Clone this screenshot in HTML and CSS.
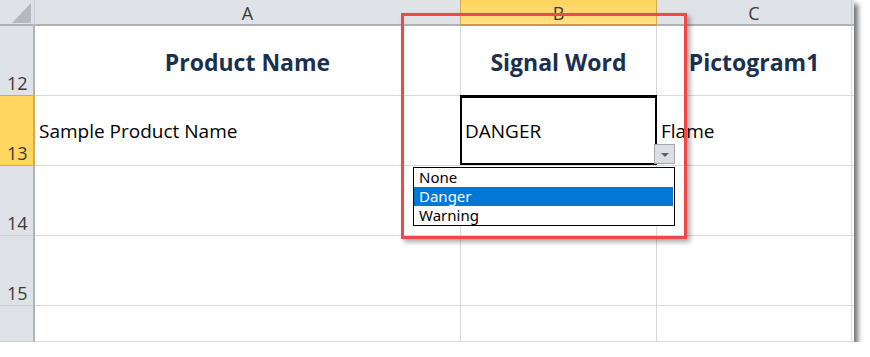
FILE: index.html
```html
<!DOCTYPE html>
<html lang="en">
<head>
    <meta charset="UTF-8">
    <title>Signal Word</title>
    <link rel="stylesheet" href="styles.css">
</head>
<body>
<div class="sheet">
    <div class="corner"><span class="corner-tri"></span></div>
    <div class="col-head">A</div>
    <div class="col-head col-active">B</div>
    <div class="col-head">C</div>
    <div class="col-head col-end"></div>

    <div class="row-head">12</div>
    <div class="cell cell-title">Product Name</div>
    <div class="cell cell-title">Signal Word</div>
    <div class="cell cell-title">Pictogram1</div>
    <div class="cell cell-end"></div>

    <div class="row-head row-active">13</div>
    <div class="cell cell-text">Sample Product Name</div>
    <div class="cell cell-text cell-selected">DANGER</div>
    <div class="cell cell-text">Flame</div>
    <div class="cell cell-end"></div>

    <div class="row-head">14</div>
    <div class="cell"></div>
    <div class="cell"></div>
    <div class="cell"></div>
    <div class="cell cell-end"></div>

    <div class="row-head">15</div>
    <div class="cell"></div>
    <div class="cell"></div>
    <div class="cell"></div>
    <div class="cell cell-end"></div>

    <div class="row-head"></div>
    <div class="cell"></div>
    <div class="cell"></div>
    <div class="cell"></div>
    <div class="cell cell-end"></div>

    <div class="dd-button"><span class="dd-arrow"></span></div>
    <ul class="dd-list">
        <li>None</li>
        <li class="active">Danger</li>
        <li>Warning</li>
    </ul>
    <div class="highlight"></div>
</div>
</body>
</html>
```

FILE: styles.css
```css
body {
    margin: 0;
    background: #fff;
    font-family: "Open Sans", Arial, sans-serif;
}
.sheet {
    position: relative;
    display: grid;
    grid-template-columns: 35px 426px 196px 195px 2px;
    grid-template-rows: 26px 70px 70px 70px 70px 36px;
    width: 854px;
    height: 342px;
    background: #fff;
    box-shadow: 4px 4px 5px rgba(0, 0, 0, 0.55);
}
.corner, .col-head, .row-head, .cell {
    box-sizing: border-box;
}
.corner {
    position: relative;
    background: #dfe2e6;
    border-right: 1px solid #c9ccd1;
    border-bottom: 2px solid #aeb1b6;
}
.corner-tri {
    position: absolute;
    left: 12px;
    top: 3px;
    width: 19px;
    height: 20px;
    background: #b5b9be;
    clip-path: polygon(100% 0, 100% 100%, 0 100%);
}
.col-head {
    display: flex;
    justify-content: center;
    background: #dfe2e6;
    border-right: 1px solid #c9ccd1;
    border-bottom: 2px solid #aeb1b6;
    color: #3a3a3a;
    font-size: 18px;
    line-height: 26px;
}
.col-active {
    background: linear-gradient(#ffd45e, #ffe084);
    border-left: 1px solid #d6aa4e;
    border-right: 1px solid #d6aa4e;
    border-bottom-color: #c99c42;
    margin-left: -1px;
}
.col-end {
    border-right: none;
}
.row-head {
    display: flex;
    align-items: flex-end;
    padding: 0 0 3px 7px;
    background: #dfe2e6;
    border-right: 2px solid #aeb1b6;
    border-bottom: 1px solid #c9ccd1;
    color: #3a3a3a;
    font-size: 18px;
    line-height: 18px;
}
.row-active {
    background: #ffd65f;
    border-right-color: #d6aa4e;
    border-bottom-color: #d6aa4e;
    border-top: 1px solid #d6aa4e;
    margin-top: -1px;
}
.cell {
    position: relative;
    display: flex;
    border-right: 1px solid #d9d9d9;
    border-bottom: 1px solid #d9d9d9;
}
.cell-end {
    border-right: none;
}
.cell-title {
    justify-content: center;
    align-items: flex-end;
    padding-bottom: 17px;
    color: #1b2f4e;
    font-size: 23px;
    font-weight: 700;
    line-height: 31px;
}
.cell-text {
    align-items: center;
    padding-left: 4px;
    color: #000;
    font-size: 19px;
}
.cell-selected::after {
    content: "";
    position: absolute;
    left: -1px;
    top: -1px;
    right: -1px;
    bottom: 0;
    border: 2px solid #000;
    border-top-width: 3px;
}
.dd-button {
    position: absolute;
    left: 654px;
    top: 144px;
    width: 21px;
    height: 20px;
    box-sizing: border-box;
    display: flex;
    justify-content: center;
    align-items: center;
    background: #dcdee3;
    border: 1px solid #a3a6ad;
    z-index: 2;
}
.dd-arrow {
    width: 0;
    height: 0;
    margin-top: 1px;
    border-left: 4px solid transparent;
    border-right: 4px solid transparent;
    border-top: 4px solid #5d5f65;
}
.dd-list {
    position: absolute;
    left: 413px;
    top: 167px;
    width: 262px;
    margin: 0;
    padding: 0;
    list-style: none;
    box-sizing: border-box;
    background: #fff;
    border: 1px solid #000;
    font-family: "Noto Sans", sans-serif;
    font-size: 15px;
    line-height: 19px;
    color: #000;
    z-index: 2;
}
.dd-list li {
    padding-left: 5px;
    margin-right: 1px;
}
.dd-list li.active {
    background: #0078d7;
    color: #fff;
}
.highlight {
    position: absolute;
    left: 401px;
    top: 13px;
    width: 286px;
    height: 226px;
    box-sizing: border-box;
    border: 3px solid #f04848;
    box-shadow: 3px 3px 5px rgba(0, 0, 0, 0.35);
    z-index: 3;
}
```
